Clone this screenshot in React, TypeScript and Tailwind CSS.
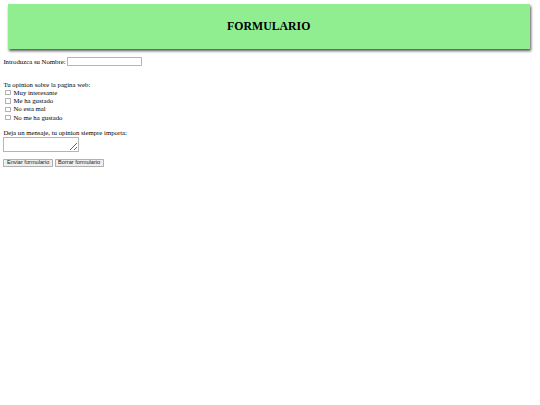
import React from "react";

export default function App() {
  const options = ["Muy interesante", "Me ha gustado", "No esta mal", "No me ha gustado"];
  return (
    <div className="w-[1280px] h-[960px] bg-white [zoom:0.421875] overflow-hidden">
      <div className="p-2 font-['Liberation_Serif',serif] text-[16px] leading-[18px] text-black">
        <div className="ml-[10px] mt-[2px] w-[1238px] h-[106px] bg-[#90ee90] shadow-[2px_4px_6px_#555] flex items-center justify-center">
          <h1 className="text-[28px] font-bold leading-[32px] font-['Liberation_Serif',serif]">FORMULARIO</h1>
        </div>
        <form className="mt-[19px]">
          <div className="flex items-center h-[21px]">
            <span>Introduzca su Nombre:</span>
            <input
              type="text"
              className="ml-[4px] w-[177px] h-[21px] border border-[#b5b5b5] rounded-[2px] bg-white px-[2px] text-[13.33px] font-['Liberation_Sans',sans-serif]"
            />
          </div>
          <div className="h-[35px]" />
          <div>Tu opinion sobre la pagina web:</div>
          <div className="flex flex-col">
            {options.map((o) => (
              <label key={o} className="flex items-center h-[20px]">
                <input
                  type="checkbox"
                  className="appearance-none ml-[4px] mr-[7px] w-[13px] h-[13px] border border-[#b0b0b0] rounded-[2px] bg-white"
                />
                <span>{o}</span>
              </label>
            ))}
          </div>
          <div className="mt-[17px]">Deja un mensaje, tu opinion siempre importa:</div>
          <textarea className="block w-[180px] h-[37px] border border-[#b5b5b5] rounded-[2px] bg-white resize" />
          <div className="mt-[15px] flex gap-[4px]">
            <button
              type="button"
              className="h-[21px] px-[6px] border border-[#b0b0b0] rounded-[2px] bg-[#efefef] text-[13.33px] font-['Liberation_Sans',sans-serif] leading-none text-[#222]"
            >
              Enviar formulario
            </button>
            <button
              type="button"
              className="h-[21px] px-[6px] border border-[#b0b0b0] rounded-[2px] bg-[#efefef] text-[13.33px] font-['Liberation_Sans',sans-serif] leading-none text-[#222]"
            >
              Borrar formulario
            </button>
          </div>
        </form>
      </div>
    </div>
  );
}
